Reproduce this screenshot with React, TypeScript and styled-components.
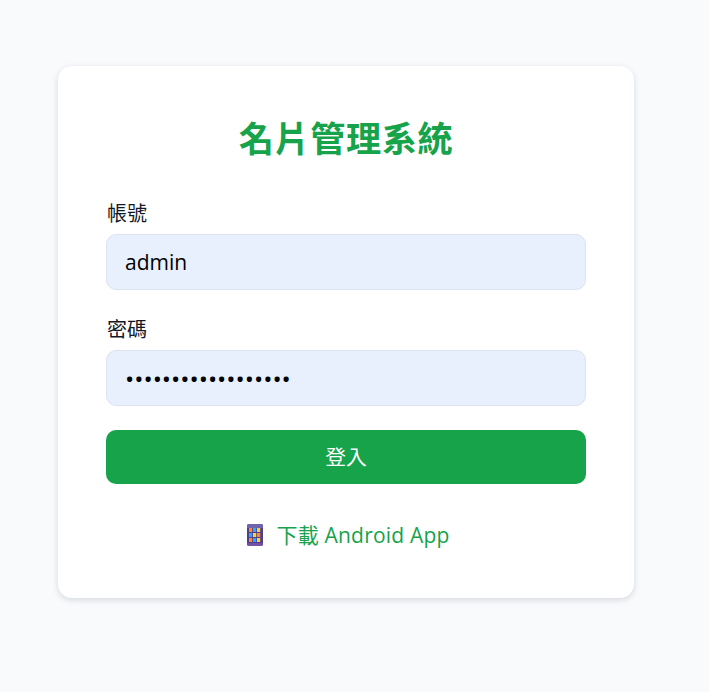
import React from "react";
import styled, { createGlobalStyle } from "styled-components";

const GlobalStyle = createGlobalStyle`
  * {
    box-sizing: border-box;
  }
  html, body {
    margin: 0;
    padding: 0;
    background-color: #f8fafc;
  }
  body {
    font-family: "Open Sans", "Noto Sans CJK TC", sans-serif;
  }
`;

const gridColors = [
  ["#ff8a2e", "#2ea6ff", "#ffd02e"],
  ["#2ea6ff", "#ffd02e", "#ff8a2e"],
  ["#ff8a2e", "#2ea6ff", "#ffd02e"],
];

const PhoneIcon = () => (
  <svg width="16" height="22" viewBox="0 0 16 22" aria-hidden="true">
    <rect x="0" y="0" width="16" height="22" rx="2" fill="#4f3f8c" />
    <path d="M0 2a2 2 0 0 1 2-2h12a2 2 0 0 1 2 2v2H0z" fill="#6d64ab" />
    <path d="M0 19h16v1a2 2 0 0 1-2 2H2a2 2 0 0 1-2-2z" fill="#7352a6" />
    {gridColors.map((row, r) =>
      row.map((color, c) => (
        <rect key={`${r}-${c}`} x={2 + c * 4} y={4 + r * 5} width="3.2" height="4" fill={color} />
      ))
    )}
  </svg>
);

export default function App() {
  return (
    <Page>
      <GlobalStyle />
      <Card>
        <Title>名片管理系統</Title>
        <Form onSubmit={(e) => e.preventDefault()}>
          <Field>
            <Label htmlFor="username">帳號</Label>
            <Input id="username" type="text" defaultValue="admin" />
          </Field>
          <Field>
            <Label htmlFor="password">密碼</Label>
            <PasswordInput id="password" type="password" defaultValue="abcdefghijklmnopqr" />
          </Field>
          <SubmitButton type="submit">登入</SubmitButton>
        </Form>
        <DownloadLink href="#">
          <PhoneIcon />
          <span>下載 Android App</span>
        </DownloadLink>
      </Card>
    </Page>
  );
}

const Page = styled.div`
  min-height: 692px;
  padding: 66px 0 0 58px;
`;

const Card = styled.div`
  width: 576px;
  height: 532px;
  padding: 48px;
  background-color: #fff;
  border-radius: 14px;
  box-shadow: 0 2px 6px rgba(15, 23, 42, 0.14);
`;

const Title = styled.h1`
  margin: 0 0 34px;
  height: 50px;
  color: #16a34a;
  font-size: 35.2px;
  font-weight: 600;
  line-height: 48px;
  letter-spacing: 0.6px;
  text-align: center;
`;

const Form = styled.form`
  display: flex;
  flex-direction: column;
`;

const Field = styled.div`
  display: flex;
  flex-direction: column;
  margin-bottom: 24px;
`;

const Label = styled.label`
  height: 36px;
  padding-left: 1px;
  color: #111827;
  font-size: 20px;
  line-height: 32px;
`;

const Input = styled.input`
  width: 480px;
  height: 56px;
  padding: 0 18px;
  background-color: #e8f0fe;
  border: 1px solid #dbe4f0;
  border-radius: 10px;
  color: #000;
  font-family: inherit;
  font-size: 21px;
  outline: none;
`;

const PasswordInput = styled(Input)`
  font-size: 24.5px;
`;

const SubmitButton = styled.button`
  width: 480px;
  height: 54px;
  padding: 0 0 3px;
  background-color: #16a34a;
  border: none;
  border-radius: 10px;
  color: #fff;
  font-family: inherit;
  font-size: 20.8px;
`;

const DownloadLink = styled.a`
  display: flex;
  align-items: center;
  justify-content: center;
  gap: 13px;
  margin-top: 33px;
  padding-left: 5px;
  color: #16a34a;
  font-size: 21px;
  line-height: 36px;
  letter-spacing: 0.2px;
  text-decoration: none;
`;
